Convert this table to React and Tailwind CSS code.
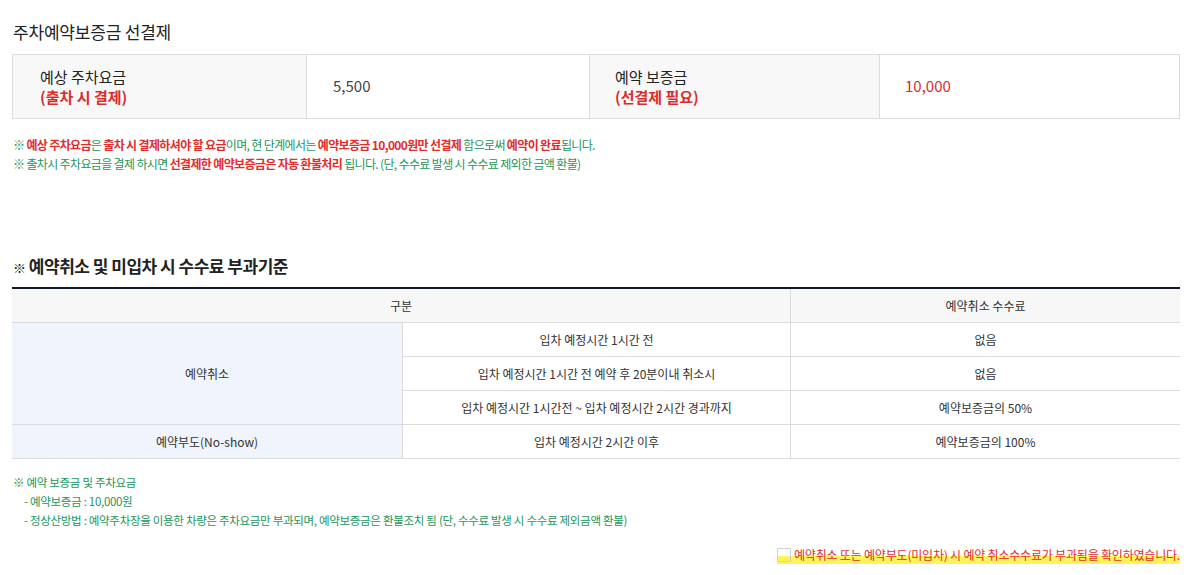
import React from 'react'

const R = ({ children }) => <span className="text-[#e12d2d] font-bold">{children}</span>

const rows = [
  { cond: '입차 예정시간 1시간 전', fee: '없음' },
  { cond: '입차 예정시간 1시간 전 예약 후 20분이내 취소시', fee: '없음' },
  { cond: '입차 예정시간 1시간전 ~ 입차 예정시간 2시간 경과까지', fee: '예약보증금의 50%' },
]

const App = () => {
  return (
    <div className="w-[1192px] h-[575px] bg-white pl-[12px] pr-[12px] pt-[19px] font-['Noto_Sans_CJK_KR','Noto_Sans',sans-serif] text-[#222] overflow-hidden">
      <h2 className="text-[17px] leading-[26px] pl-[1px] text-[#222] tracking-[-0.2px]">주차예약보증금 선결제</h2>

      <div className="mt-[9px] grid grid-cols-[293px_283px_290px_1fr] border border-[#dcdcdc] h-[65px]">
        <div className="bg-[#f8f8f8] pl-[27px] flex flex-col justify-center text-[15px] leading-[20px]">
          <span>예상 주차요금</span>
          <span className="text-[#d92d2d] font-bold">(출차 시 결제)</span>
        </div>
        <div className="border-l border-[#dcdcdc] pl-[26px] flex items-center text-[15px] text-[#444]">5,500</div>
        <div className="bg-[#f8f8f8] border-l border-[#dcdcdc] pl-[25px] flex flex-col justify-center text-[15px] leading-[20px]">
          <span>예약 보증금</span>
          <span className="text-[#d92d2d] font-bold">(선결제 필요)</span>
        </div>
        <div className="border-l border-[#dcdcdc] pl-[25px] flex items-center text-[15px] text-[#d92d2d]">10,000</div>
      </div>

      <div className="mt-[16px] pl-[1px] text-[12px] leading-[19px] text-[#23965d] tracking-[-0.65px]">
        <p>※ <R>예상 주차요금</R>은 <R>출차 시 결제하셔야 할 요금</R>이며, 현 단계에서는 <R>예약보증금 10,000원만 선결제</R> 함으로써 <R>예약이 완료</R>됩니다.</p>
        <p>※ 출차시 주차요금을 결제 하시면 <R>선결제한 예약보증금은 자동 환불처리</R> 됩니다. (단, 수수료 발생 시 수수료 제외한 금액 환불)</p>
      </div>

      <h2 className="mt-[80px] pl-[1px] text-[17px] leading-[26px] font-bold text-[#222] tracking-[-0.5px]">
        <span className="text-[13px]">※</span> 예약취소 및 미입차 시 수수료 부과기준
      </h2>

      <div className="mt-[6px] border-t-2 border-[#111827] text-[12px] text-[#333]">
        <div className="grid grid-cols-[778px_1fr] h-[34px] bg-[#f7f7f7] border-b border-[#dcdcdc]">
          <div className="flex items-center justify-center">구분</div>
          <div className="flex items-center justify-center border-l border-[#dcdcdc]">예약취소 수수료</div>
        </div>
        <div className="grid grid-cols-[390px_388px_1fr]">
          <div className="row-span-3 bg-[#f0f4fd] border-b border-[#dcdcdc] flex items-center justify-center">예약취소</div>
          {rows.map((r) => (
            <React.Fragment key={r.cond}>
              <div className="h-[34px] border-l border-b border-[#dcdcdc] flex items-center justify-center">{r.cond}</div>
              <div className="h-[34px] border-l border-b border-[#dcdcdc] flex items-center justify-center">{r.fee}</div>
            </React.Fragment>
          ))}
          <div className="h-[34px] bg-[#f0f4fd] border-b border-[#dcdcdc] flex items-center justify-center">예약부도(No-show)</div>
          <div className="h-[34px] border-l border-b border-[#dcdcdc] flex items-center justify-center">입차 예정시간 2시간 이후</div>
          <div className="h-[34px] border-l border-b border-[#dcdcdc] flex items-center justify-center">예약보증금의 100%</div>
        </div>
      </div>

      <div className="mt-[14px] pl-[1px] text-[11.5px] leading-[19px] text-[#23965d] tracking-[-0.3px]">
        <p>※ 예약 보증금 및 주차요금</p>
        <p className="pl-[11px]">- 예약보증금 : 10,000원</p>
        <p className="pl-[11px]">- 정상산방법 : 예약주차장을 이용한 차량은 주차요금만 부과되며, 예약보증금은 환불조치 됨 (단, 수수료 발생 시 수수료 제외금액 환불)</p>
      </div>

      <div className="mt-[16px] flex justify-end">
        <label className="flex items-center gap-[3px] bg-[linear-gradient(transparent_55%,#fff35a_55%)] text-[12px] leading-[18px] text-[#e12d2d] tracking-[-0.2px]">
          <span className="w-[14px] h-[14px] border border-[#cfcfcf] bg-transparent rounded-[1px]"></span>
          예약취소 또는 예약부도(미입차) 시 예약 취소수수료가 부과됨을 확인하였습니다.
        </label>
      </div>
    </div>
  )
}

export default App
